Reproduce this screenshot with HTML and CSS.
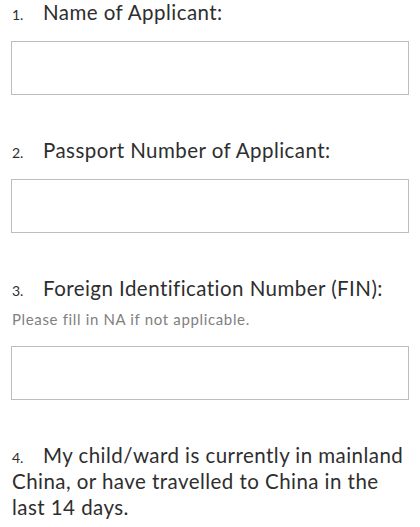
FILE: index.html
```html
<!DOCTYPE html>
<html lang="en">

<head>
    <meta charset="UTF-8">
    <meta name="viewport" content="width=device-width, initial-scale=1.0">
    <title>Application Form</title>
    <link rel="stylesheet" href="styles.css">
</head>

<body>
    <form class="form">
        <div class="field">
            <label class="q" for="name"><span class="num">1.</span>Name of Applicant:</label>
            <input class="box" type="text" id="name">
        </div>

        <div class="field">
            <label class="q" for="passport"><span class="num">2.</span>Passport Number of Applicant:</label>
            <input class="box" type="text" id="passport">
        </div>

        <div class="field">
            <label class="q" for="fin"><span class="num">3.</span>Foreign Identification Number (FIN):</label>
            <p class="hint">Please fill in NA if not applicable.</p>
            <input class="box" type="text" id="fin">
        </div>

        <div class="field">
            <p class="q"><span class="num">4.</span>My child/ward is currently in mainland China, or have travelled to China in the last 14 days.</p>
        </div>
    </form>
</body>

</html>
```

FILE: styles.css
```css
* {
    margin: 0;
    padding: 0;
    box-sizing: border-box;
}

body {
    font-family: Lato, "Open Sans", sans-serif;
    font-variant-ligatures: none;
    color: #2e2e2e;
    background: #fff;
}

.form {
    margin-top: -1px;
    padding: 0 11px;
}

.field {
    margin-bottom: 42px;
}

.field:last-child {
    margin-bottom: 0;
}

.q {
    display: block;
    font-size: 20.5px;
    line-height: 26px;
    letter-spacing: 0.45px;
    padding-left: 1px;
}

.num {
    display: inline-block;
    width: 31px;
    font-size: 14px;
    line-height: 1;
    letter-spacing: 0;
}

.hint {
    margin-top: 8px;
    font-size: 15px;
    line-height: 20px;
    letter-spacing: 0.65px;
    color: #808080;
    padding-left: 1px;
}

.box {
    display: block;
    width: 100%;
    height: 54px;
    margin-top: 16px;
    border: 1px solid #bdbdbd;
    background: #fff;
    font: inherit;
}

.hint + .box {
    margin-top: 17px;
}
```
